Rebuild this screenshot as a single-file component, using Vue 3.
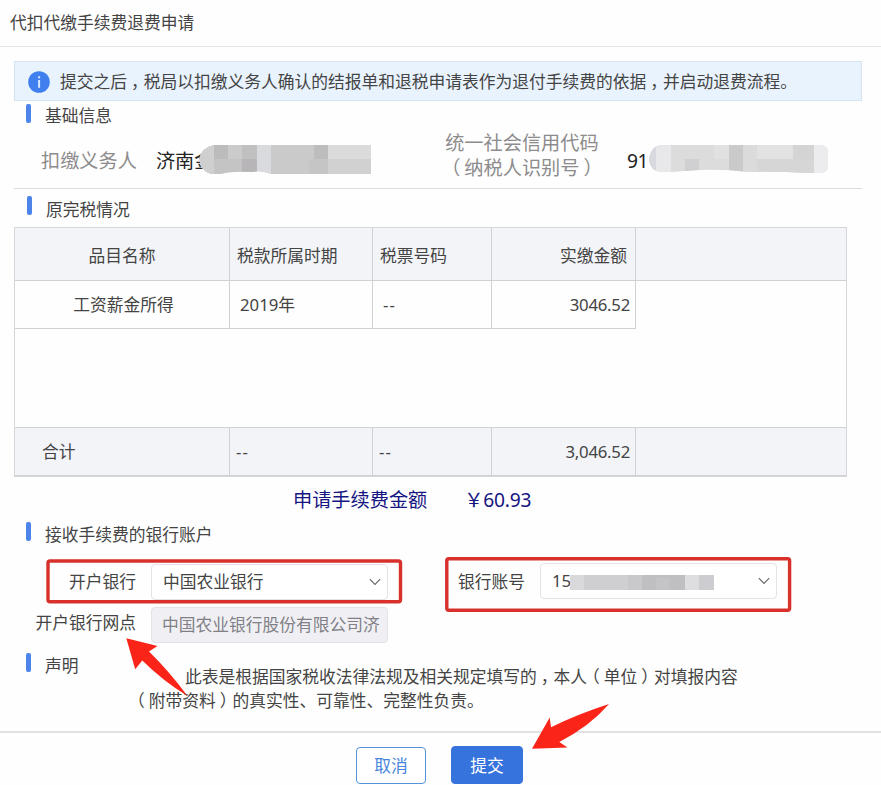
<script setup>
const headers = ['品目名称', '税款所属时期', '税票号码', '实缴金额', '']
const row = ['工资薪金所得', '2019年', '--', '3046.52']
const totals = ['合计', '--', '--', '3,046.52', '']
</script>

<template>
  <div class="dialog">
    <header class="title">代扣代缴手续费退费申请</header>

    <main class="body">
      <div class="alert">
        <svg class="info-icon" viewBox="0 0 22 22" width="22" height="22">
          <circle cx="11" cy="11" r="10.8" fill="#3f7fee" />
          <rect x="10.1" y="5.2" width="2" height="2.1" fill="#d8e8ff" />
          <rect x="10.1" y="9" width="2" height="7.8" fill="#d8e8ff" />
        </svg>
        <span>提交之后<b class="comma">，</b>税局以扣缴义务人确认的结报单和退税申请表作为退付手续费的依据<b class="comma">，</b>并启动退费流程。</span>
      </div>

      <h2 class="section base"><i class="bar"></i><span>基础信息</span></h2>
      <div class="info">
        <span class="label">扣缴义务人</span>
        <span class="value name">济南金</span>
        <svg class="mask mask-name" viewBox="0 0 172 29" width="172" height="29">
          <defs>
            <clipPath id="mask-a"><path d="M0 14 Q3 2 15 0 H172 V29 H72 Q62 25 53 27 Q30 26 22 29 H12 Q2 27 0 14Z" /></clipPath>
          </defs>
          <g clip-path="url(#mask-a)">
            <rect width="172" height="29" fill="#d2d1d2" />
            <rect width="15" height="29" fill="#d0cfd0" />
            <rect x="15" width="14" height="14" fill="#bdbcbd" />
            <rect x="29" width="14" height="14" fill="#cccbcc" />
            <rect x="43" width="15" height="14" fill="#c1c0c1" />
            <rect x="15" y="14" width="28" height="15" fill="#c5c4c5" />
            <rect x="43" y="14" width="15" height="15" fill="#b7b5b7" />
            <rect x="58" width="14" height="29" fill="#d9dadd" />
            <rect x="72" width="43" height="29" fill="#cbcacb" />
            <rect x="115" width="14" height="14" fill="#bebdbe" />
            <rect x="110" y="14" width="19" height="15" fill="#c6c5c6" />
            <rect x="129" width="43" height="14" fill="#dcdbdc" />
            <rect x="129" y="14" width="43" height="15" fill="#d2d1d2" />
          </g>
        </svg>
        <span class="label tax-id">统一社会信用代码<br /><b class="open">（</b>纳税人识别号<b class="close">）</b></span>
        <span class="value code">91</span>
        <svg class="mask" viewBox="0 0 180 29" width="180" height="29">
          <defs>
            <clipPath id="mask-b"><path d="M0 14 Q2 1 12 0 H173 Q179 1 179 8 V22 Q178 28 170 28 H155 Q130 26 100 27 Q75 24 50 25 L22 27 H12 Q1 26 0 14Z" /></clipPath>
          </defs>
          <g clip-path="url(#mask-b)">
            <rect width="180" height="29" fill="#dddcdd" />
            <rect width="7" height="29" fill="#d8d9df" />
            <rect x="7" width="15" height="29" fill="#e8e7e9" />
            <rect x="36" y="14" width="14" height="15" fill="#d0cfd1" />
            <rect x="65" width="15" height="14" fill="#e2e1e2" />
            <rect x="80" width="14" height="29" fill="#cbcacb" />
            <rect x="94" width="14" height="29" fill="#dcdbdc" />
            <rect x="108" width="36" height="14" fill="#e3e2e3" />
            <rect x="144" width="21" height="14" fill="#d5d4d5" />
            <rect x="108" y="14" width="57" height="15" fill="#d7d6d7" />
            <rect x="165" width="15" height="29" fill="#ececee" />
          </g>
        </svg>
      </div>

      <h2 class="section tax"><i class="bar"></i><span>原完税情况</span></h2>
      <div class="table">
        <div class="tr head">
          <div v-for="(text, i) in headers" :key="i" class="cell">{{ text }}</div>
        </div>
        <div class="tr data">
          <div v-for="(text, i) in row" :key="i" class="cell" :class="{ dash: text === '--' }">{{ text }}</div>
        </div>
        <div class="space"></div>
        <div class="tr total">
          <div v-for="(text, i) in totals" :key="i" class="cell" :class="{ dash: text === '--' }">{{ text }}</div>
        </div>
      </div>

      <div class="amount"><span>申请手续费金额</span><span class="money">￥60.93</span></div>

      <h2 class="section bank"><i class="bar"></i><span>接收手续费的银行账户</span></h2>
      <div class="form">
        <label class="flabel">开户银行</label>
        <div class="select">
          <span>中国农业银行</span>
          <svg class="chev" viewBox="0 0 12 8" width="12" height="8"><path d="M.8 1.2 6 6.4 11.2 1.2" /></svg>
        </div>
        <label class="flabel">银行账号</label>
        <div class="select account">
          <span>15</span>
          <svg class="digits" viewBox="0 0 144 15" width="144" height="15">
            <rect width="14" height="15" fill="#d9d8da" />
            <rect x="14" width="58" height="15" fill="#cfced0" />
            <rect x="58" width="14" height="15" fill="#c9c8ca" />
            <rect x="72" width="43" height="15" fill="#bfbec0" />
            <rect x="86" y="3" width="14" height="12" fill="#c4c3c5" />
            <rect x="115" width="14" height="15" fill="#dedddf" />
            <rect x="129" width="15" height="15" fill="#cdccd0" />
          </svg>
          <svg class="chev" viewBox="0 0 12 8" width="12" height="8"><path d="M.8 1.2 6 6.4 11.2 1.2" /></svg>
        </div>
        <label class="flabel branch">开户银行网点</label>
        <div class="select disabled"><span>中国农业银行股份有限公司济</span></div>
      </div>

      <div class="declare">
        <h2 class="section"><i class="bar"></i><span>声明</span></h2>
        <p>此表是根据国家税收法律法规及相关规定填写的<b class="comma">，</b>本人<b class="open">（</b>单位<b class="close">）</b>对填报内容<br /><b class="open first">（</b>附带资料<b class="close">）</b>的真实性、可靠性、完整性负责。</p>
      </div>
    </main>

    <footer class="actions">
      <button class="btn cancel">取消</button>
      <button class="btn submit">提交</button>
    </footer>

    <svg class="marks" viewBox="0 0 881 785" width="881" height="785">
      <g fill="none" stroke="#d8312b" stroke-width="3.4">
        <rect x="48" y="561" width="352.5" height="40.8" rx="2" />
        <rect x="446.8" y="558.8" width="342.8" height="51.4" rx="2" />
      </g>
      <g fill="#fb2419">
        <path d="M126.3 638.3 157.5 646 149 651.5Q169 671 187.5 696Q163 681 142.3 660.5L135.2 669.3Z" />
        <path d="M532 748.8 549.7 717.5 551 727.2Q578 714 609 704Q590 726 559.3 742L567.5 747.5Z" />
      </g>
    </svg>
  </div>
</template>

<style>
body { margin: 0; background: #fefefe; }
</style>

<style scoped>
* { box-sizing: border-box; }
.dialog {
  position: relative;
  display: flex;
  flex-direction: column;
  width: 881px;
  height: 785px;
  overflow: hidden;
  background: #fefefe;
  color: #444;
  font-family: "Noto Sans", "Noto Sans CJK SC", sans-serif;
  font-size: 16.75px;
  line-height: 24px;
  white-space: nowrap;
}
b { font-weight: 400; }
.comma { margin: 0 -4px 0 4px; }
.open { margin: 0 4px 0 -4px; }
.close { margin: 0 -4px 0 4px; }
.title { height: 47px; padding: 11px 10px 0; border-bottom: 1px solid #e3e4e6; }
.body { height: 684px; padding: 14px 19px 0 14px; }
.alert {
  display: flex;
  align-items: center;
  height: 40px;
  padding: 1px 0 0 13px;
  gap: 10px;
  background: #e9f3fe;
  border: 1px solid #d6e4f1;
}
.section { display: flex; align-items: flex-start; gap: 14px; margin: 0; padding-left: 12px; font-size: inherit; font-weight: 400; }
.bar { width: 5px; height: 19px; border-radius: 2px; background: #4c84ea; }
.base { height: 24px; margin-top: 3px; }
.info {
  display: flex;
  align-items: center;
  height: 61px;
  padding: 4px 0 0 27px;
  border-bottom: 1px solid #dcdcdd;
  font-size: 19.2px;
  line-height: 25px;
}
.label { color: #8d8b8c; }
.value { color: #222; }
.name { flex: none; margin-left: 19px; }
.mask { flex: none; margin-top: -1px; }
.mask-name { margin-left: -14.6px; }
.tax-id { flex: none; width: 154px; margin: -11px 0 0 74px; text-align: center; }
.code { width: 22px; margin-left: 28px; letter-spacing: -.3px; }
.tax { height: 38px; padding: 7px 0 0 13px; }
.tax span { margin-top: 2px; }
.table { width: 833px; height: 250px; border: 1px solid #d5d6da; }
.tr { display: grid; grid-template-columns: 215px 143px 119px 144px 1fr; }
.cell { display: flex; align-items: center; border-right: 1px solid #d0d1d5; padding: 0 8px 0 7px; }
.cell:nth-child(4) { justify-content: flex-end; }
.cell:nth-child(5) { border-right: 0; }
.dash { letter-spacing: 1.2px; }
.head { height: 53px; padding-top: 1px; background: #f3f4f8; border-bottom: 1px solid #d0d1d5; }
.head .cell { margin-top: -1px; padding-top: 3px; }
.head .cell:first-child, .data .cell:first-child { justify-content: center; padding-left: 8px; }
.data { width: 621px; height: 48px; grid-template-columns: 215px 143px 119px 144px; border-bottom: 1px solid #d0d1d5; }
.data .cell { padding: 0 5px 0 10px; }
.data .cell:nth-child(4), .total .cell:nth-child(4) { letter-spacing: -.25px; }
.space { height: 98px; }
.total { height: 49px; background: #f3f4f8; border-top: 1px solid #d0d1d5; }
.total .cell { padding: 0 5px 0 6px; border-bottom: 1px solid #d0d1d5; }
.total .cell:first-child { padding-left: 27px; }
.amount { display: flex; height: 45px; gap: 37px; padding: 11px 0 0 279px; color: #151582; font-size: 19.2px; }
.money { letter-spacing: -.2px; }
.bank { height: 42px; }
.bank span { margin-top: 1px; }
.form { display: grid; grid-template-columns: 122px 237px 122px 237px; grid-template-rows: 36px 36px; column-gap: 15px; row-gap: 7px; align-items: center; }
.flabel { text-align: right; }
.select {
  display: flex;
  align-items: center;
  height: 36px;
  padding: 0 6px 0 11px;
  border: 1px solid #e3e3e7;
  border-radius: 4px;
  background: #fff;
}
.account { margin-top: -2px; }
.digits { margin: 3px 0 0 -1px; }
.chev { margin-left: auto; fill: none; stroke: #666; stroke-width: 1.1; }
.branch { margin-top: -4px; }
.disabled { background: #f0f0f4; color: #818087; padding: 0 0 0 10px; }
.declare { display: flex; padding-top: 10px; }
.declare .section { width: 118px; }
.declare .section span { margin-top: 1px; }
.declare p { margin: 12px 0 0; text-indent: 53px; }
.actions { display: flex; align-items: flex-start; gap: 25px; height: 54px; padding: 14px 0 0 356px; border-top: 2px solid #e1e1e3; }
.btn { width: 70px; height: 37px; padding: 0; border: 1px solid #5293dc; border-radius: 4px; background: #fff; color: #4784dd; font: inherit; }
.submit { width: 72px; height: 38px; margin-top: -1px; padding-top: 2px; border-color: #3673dc; background: #3673dc; color: #fff; }
.marks { position: absolute; top: 0; left: 0; pointer-events: none; }
</style>
